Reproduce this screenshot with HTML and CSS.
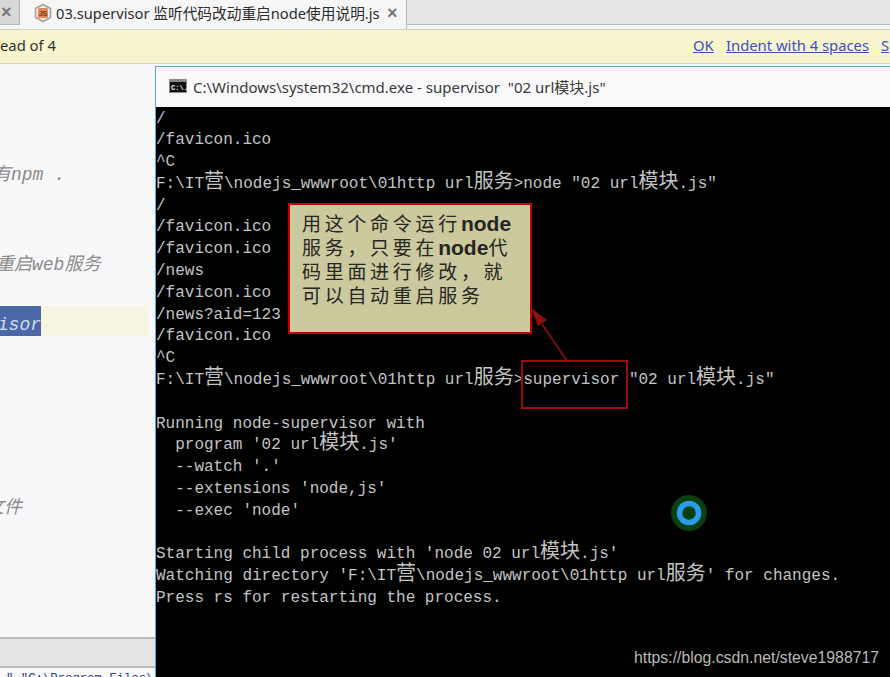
FILE: index.html
```html
<!DOCTYPE html>
<html lang="en">
<head>
  <meta charset="UTF-8">
  <title>supervisor</title>
  <link rel="stylesheet" href="styles.css">
</head>

<body>
  <div class="tabbar">
    <div class="tab-prev"><span class="tab-close">×</span></div>
    <div class="tab-active">
      <svg class="tab-icon" width="18" height="20" viewBox="0 0 18 20">
        <path d="M9 1.5 L16.5 5.5 V14.5 L9 18.5 L1.5 14.5 V5.5 Z" fill="#f1eeea" stroke="#a9a39c" stroke-width="1.6"/>
        <rect x="4" y="5" width="10" height="10" rx="1" fill="#e08a5c"/>
        <text x="9" y="13" class="tab-icon-text">JS</text>
      </svg>
      <span class="tab-name">03.supervisor 监听代码改动重启node使用说明.js</span>
      <span class="tab-close">×</span>
    </div>
  </div>

  <div class="notice">
    <span class="notice-text">ead of 4</span>
    <a class="notice-link ok">OK</a>
    <a class="notice-link indent">Indent with 4 spaces</a>
    <a class="notice-link last">S</a>
  </div>

  <div class="main">
    <div class="pane">
      <div class="pane-line line-npm"><span class="cut-a">有npm .</span></div>
      <div class="pane-line line-web"><span class="cut-b">重启web服务</span></div>
      <div class="pane-line line-current"><span class="selection">visor</span></div>
      <div class="pane-line line-file"><span class="cut-c">文件</span></div>
      <div class="pane-status"></div>
      <div class="pane-bottom">" "C:\Program Files\</div>
    </div>

    <div class="cmd">
      <div class="cmd-title">
        <svg class="cmd-icon" width="18" height="14" viewBox="0 0 18 14">
          <rect width="18" height="14" fill="#8a8a8a"/>
          <rect x="1" y="3" width="16" height="10" fill="#111"/>
          <text x="2" y="11" class="cmd-icon-text">C:\.</text>
        </svg>
        <span>C:\Windows\system32\cmd.exe - supervisor  "02 url模块.js"</span>
      </div>
      <div class="console">
        <div class="con-line">/</div>
        <div class="con-line">/favicon.ico</div>
        <div class="con-line">^C</div>
        <div class="con-line">F:\IT<i>营</i>\nodejs_wwwroot\01http url<i>服务</i>&gt;node "02 url<i>模块</i>.js"</div>
        <div class="con-line">/</div>
        <div class="con-line">/favicon.ico</div>
        <div class="con-line">/favicon.ico</div>
        <div class="con-line">/news</div>
        <div class="con-line">/favicon.ico</div>
        <div class="con-line">/news?aid=123</div>
        <div class="con-line">/favicon.ico</div>
        <div class="con-line">^C</div>
        <div class="con-line">F:\IT<i>营</i>\nodejs_wwwroot\01http url<i>服务</i>&gt;supervisor "02 url<i>模块</i>.js"</div>
        <div class="con-line"></div>
        <div class="con-line">Running node-supervisor with</div>
        <div class="con-line">  program '02 url<i>模块</i>.js'</div>
        <div class="con-line">  --watch '.'</div>
        <div class="con-line">  --extensions 'node,js'</div>
        <div class="con-line">  --exec 'node'</div>
        <div class="con-line"></div>
        <div class="con-line">Starting child process with 'node 02 url<i>模块</i>.js'</div>
        <div class="con-line">Watching directory 'F:\IT<i>营</i>\nodejs_wwwroot\01http url<i>服务</i>' for changes.</div>
        <div class="con-line">Press rs for restarting the process.</div>
      </div>
    </div>
  </div>

  <!-- annotations on top of the recording -->
  <div class="callout">用这个命令运行<b>node</b><br>服务，只要在<b>node</b>代<br>码里面进行修改，就<br>可以自动重启服务</div>
  <div class="cmd-mark"></div>
  <svg class="arrow" width="60" height="70" viewBox="0 0 60 70">
    <path d="M37 55 L12 18" stroke="#8f0f0f" stroke-width="1.5" fill="none"/>
    <path d="M1 2 L17 14 L8 20 Z" fill="#8f0f0f"/>
  </svg>
  <svg class="spinner" width="38" height="38" viewBox="0 0 38 38">
    <circle cx="19" cy="19" r="18" fill="#0a3f12"/>
    <circle cx="19" cy="19" r="9.5" fill="none" stroke="#2a9de6" stroke-width="5.5"/>
  </svg>
  <div class="watermark">https://blog.csdn.net/steve1988717</div>
</body>

</html>
```

FILE: styles.css
```css
html,
body {
  margin: 0;
  height: 677px;
  overflow: hidden;
}

body {
  position: relative;
  display: flex;
  flex-direction: column;
  font-family: "Noto Sans", "Noto Sans CJK SC", sans-serif;
  background-color: #f8f8fa;
}

/* tabs */
.tabbar {
  display: flex;
  flex: none;
  height: 30px;
  box-sizing: border-box;
  background: linear-gradient(#e6e6e8 0, #e6e6e8 24px, #b9b9b9 24px, #b9b9b9 25px, #f4f4f4 25px, #f4f4f4 29px, #cfcfcf 29px);
}

.tab-prev {
  display: flex;
  align-items: center;
  justify-content: flex-start;
  box-sizing: border-box;
  width: 20px;
  height: 24px;
  padding-left: 1px;
  background-color: #d8d8d8;
  border-right: 1px solid #b5b5b5;
}

.tab-active {
  display: flex;
  align-items: center;
  box-sizing: border-box;
  width: 387px;
  height: 29px;
  padding: 0 7px 4px 14px;
  background-color: #f6f6f6;
  border-right: 1px solid #bbbbbb;
}

.tab-icon {
  flex: none;
  margin-right: 4px;
}

.tab-icon-text {
  font-family: "Liberation Sans", sans-serif;
  font-size: 7px;
  font-weight: bold;
  fill: #7a3312;
  text-anchor: middle;
}

.tab-name {
  flex: 1;
  font-size: 14.7px;
  color: #2c2c2c;
  white-space: nowrap;
}

.tab-close {
  width: 12px;
  font-family: "Liberation Sans", sans-serif;
  font-size: 18px;
  font-weight: bold;
  line-height: 18px;
  color: #77777c;
}

/* yellow bar */
.notice {
  display: flex;
  flex: none;
  align-items: center;
  box-sizing: border-box;
  height: 34px;
  padding-bottom: 3px;
  font-size: 14.8px;
  color: #333333;
  background-color: #f7f5cd;
  border-bottom: 1px solid #d3d3c8;
  white-space: nowrap;
}

.notice-text {
  width: 693px;
}

.notice-link {
  color: #3c50c4;
  text-decoration: underline;
}

.ok {
  width: 33px;
}

.indent {
  width: 155px;
}

/* main */
.main {
  display: flex;
  flex: 1;
  min-height: 0;
}

.pane {
  display: flex;
  flex-direction: column;
  flex: none;
  width: 155px;
  overflow: hidden;
  background-color: #f8f8fa;
  color: #8b8b8b;
}

.pane-line {
  flex: none;
  height: 30px;
  font-family: "Liberation Mono", "Noto Sans CJK SC", monospace;
  font-size: 18px;
  font-style: italic;
  line-height: 34px;
  white-space: nowrap;
}

.line-npm {
  margin-top: 94px;
}

.cut-a {
  display: block;
  margin-left: -7px;
}

.line-web {
  margin-top: 60px;
}

.cut-b {
  display: block;
  margin-left: -4px;
}

.line-current {
  width: 148px;
  margin-top: 28px;
  background-color: #f5f5e2;
}

.selection {
  display: block;
  width: 41px;
  height: 30px;
  overflow: hidden;
  line-height: 38px;
  text-indent: -13px;
  color: #d5dcec;
  background-color: #4a68a8;
}

.line-file {
  margin-top: 155px;
}

.cut-c {
  display: block;
  margin-left: -14px;
}

.pane-status {
  flex: none;
  box-sizing: border-box;
  height: 31px;
  margin-top: auto;
  background-color: #e3e3e3;
  border-top: 2px solid #bdbdbd;
  border-bottom: 2px solid #bdbdbd;
}

.pane-bottom {
  flex: none;
  height: 9px;
  overflow: hidden;
  padding-left: 6px;
  font-family: "Liberation Mono", monospace;
  font-size: 12.3px;
  line-height: 23px;
  color: #34417e;
  white-space: pre;
}

/* cmd window */
.cmd {
  flex: 1;
  margin-top: 2px;
  border-top: 1px solid #5aa7dc;
  border-left: 1px solid #5aa7dc;
  background-color: #000000;
}

.cmd-title {
  display: flex;
  align-items: center;
  box-sizing: border-box;
  height: 40px;
  padding: 0 0 2px 13px;
  font-size: 15px;
  color: #3a3a3a;
  background-color: #f9f9fb;
  white-space: pre;
}

.cmd-icon {
  flex: none;
  margin-right: 6px;
}

.cmd-icon-text {
  font-family: "Liberation Mono", monospace;
  font-size: 7px;
  font-weight: bold;
  fill: #eeeeee;
}

.console {
  padding-top: 1.5px;
  font-family: "Liberation Mono", monospace;
  font-size: 16px;
  color: #c4c4c4;
}

.con-line {
  height: 21.8px;
  line-height: 21.8px;
  white-space: pre;
}

.con-line i {
  font-family: "Noto Sans CJK SC", sans-serif;
  font-size: 20px;
  font-style: normal;
  line-height: 1px;
}

/* annotations */
.callout {
  position: absolute;
  top: 203px;
  left: 288px;
  box-sizing: border-box;
  width: 244px;
  height: 131px;
  padding: 6px 0 0 12px;
  font-family: "Noto Sans CJK SC", sans-serif;
  font-size: 19px;
  line-height: 24px;
  letter-spacing: 3.7px;
  color: #262622;
  background-color: #cbc99e;
  border: 2px solid #c00000;
  white-space: nowrap;
}

.callout b {
  font-family: "Liberation Sans", sans-serif;
  font-size: 21px;
  line-height: 1px;
  letter-spacing: 0;
}

.cmd-mark {
  position: absolute;
  top: 360px;
  left: 521px;
  box-sizing: border-box;
  width: 107px;
  height: 49px;
  border: 2px solid #9a0d0d;
}

.arrow {
  position: absolute;
  top: 306px;
  left: 530px;
}

.spinner {
  position: absolute;
  top: 494px;
  left: 670px;
}

.watermark {
  position: absolute;
  top: 648px;
  left: 634px;
  font-family: "Liberation Sans", sans-serif;
  font-size: 15.8px;
  line-height: 20px;
  color: #b9b9b9;
  white-space: nowrap;
}
```
